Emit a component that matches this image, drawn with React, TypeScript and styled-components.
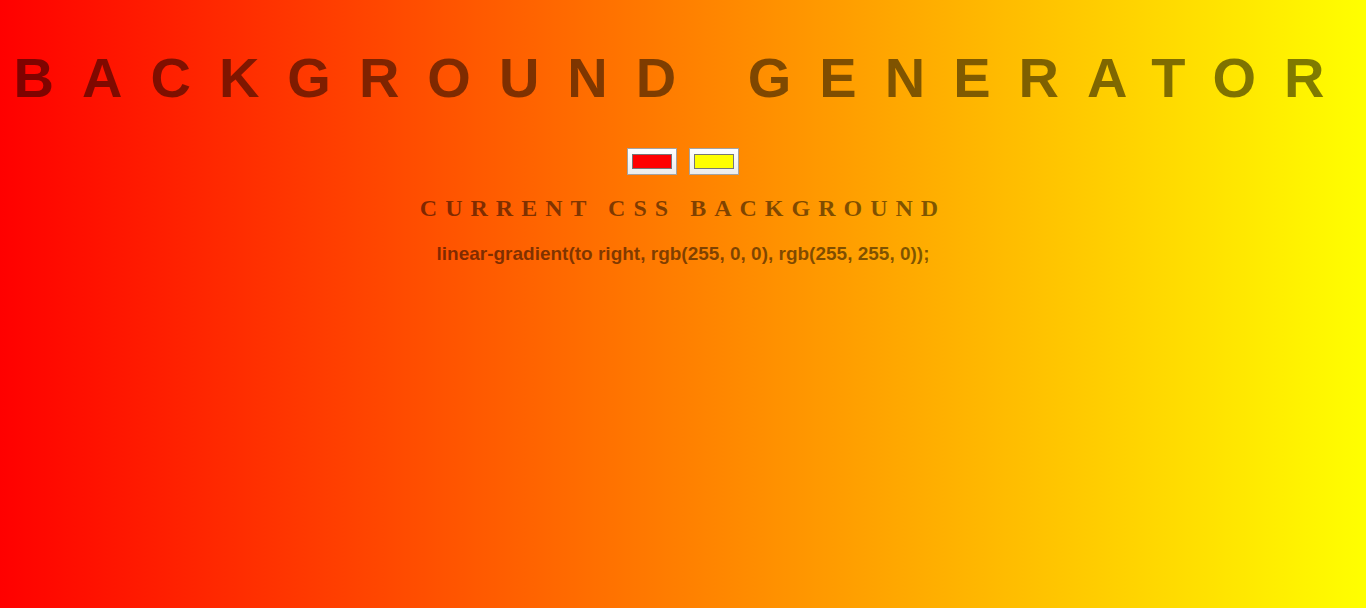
import React, { useState } from "react";
import styled, { createGlobalStyle } from "styled-components";

const GlobalStyle = createGlobalStyle`
  html, body {
    margin: 0;
    padding: 0;
  }
  body {
    font-family: "Liberation Sans", Arial, sans-serif;
  }
`;

const Page = styled.div<{ $from: string; $to: string }>`
  min-height: 100vh;
  box-sizing: border-box;
  padding: 0 8px;
  display: flex;
  flex-direction: column;
  align-items: stretch;
  text-align: center;
  color: rgba(0, 0, 0, 0.5);
  background: linear-gradient(to right, ${(p) => p.$from}, ${(p) => p.$to});
`;

const Title = styled.h1`
  margin: 46px 0 0;
  font: 700 56px/64px "Liberation Sans", Arial, sans-serif;
  letter-spacing: 28px;
  text-transform: uppercase;
  white-space: nowrap;
`;

const Pickers = styled.div`
  margin-top: 38px;
  display: flex;
  justify-content: center;
  gap: 12px;
`;

const ColorInput = styled.input`
  width: 50px;
  height: 27px;
  box-sizing: border-box;
  margin: 0;
  padding: 0;
  border: 1px solid #a3a3a3;
  background: linear-gradient(#ffffff, #ececec);
  cursor: pointer;

  &::-webkit-color-swatch-wrapper {
    padding: 5px 4px;
  }
  &::-webkit-color-swatch {
    border: 1px solid #777777;
    border-radius: 0;
  }
`;

const Subtitle = styled.h2`
  margin: 19px 0 0;
  font: 700 24px/28px "Liberation Serif", "Times New Roman", serif;
  letter-spacing: 8px;
  text-transform: uppercase;
`;

const Code = styled.h3`
  margin: 21px 0 0;
  font: 700 19px/22px "Liberation Sans", Arial, sans-serif;
  letter-spacing: 0;
`;

const hexToRgb = (hex: string) => {
  const n = parseInt(hex.slice(1), 16);
  return `rgb(${(n >> 16) & 255}, ${(n >> 8) & 255}, ${n & 255})`;
};

export default function App() {
  const [c1, setC1] = useState("#ff0000");
  const [c2, setC2] = useState("#ffff00");
  const css = `linear-gradient(to right, ${hexToRgb(c1)}, ${hexToRgb(c2)});`;

  return (
    <>
      <GlobalStyle />
      <Page $from={c1} $to={c2}>
        <Title>Background Generator</Title>
        <Pickers>
          <ColorInput type="color" value={c1} onChange={(e) => setC1(e.target.value)} />
          <ColorInput type="color" value={c2} onChange={(e) => setC2(e.target.value)} />
        </Pickers>
        <Subtitle>Current CSS Background</Subtitle>
        <Code>{css}</Code>
      </Page>
    </>
  );
}
